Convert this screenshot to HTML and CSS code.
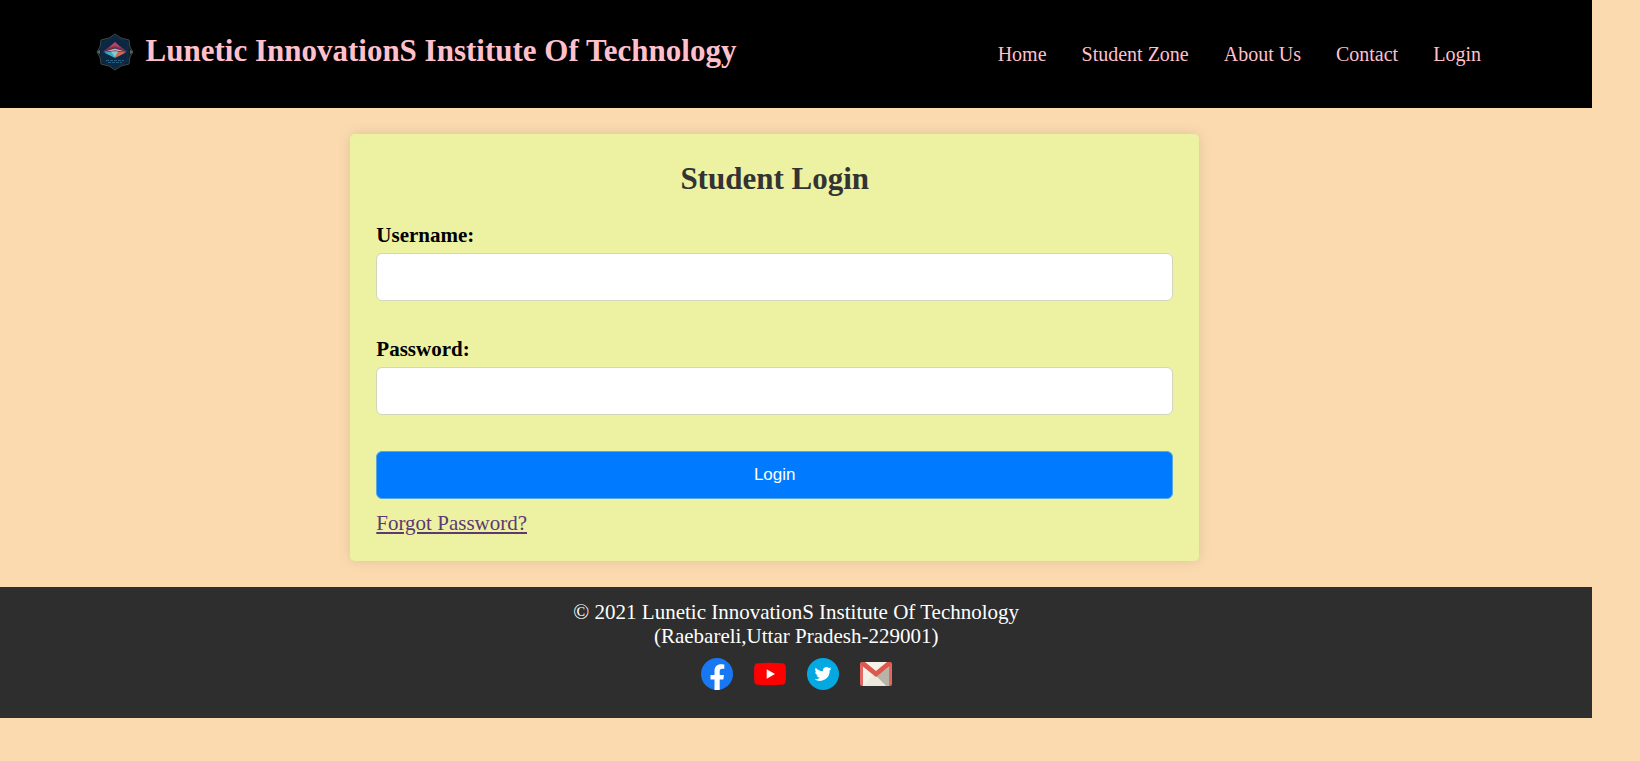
FILE: index.html
```html
<!DOCTYPE html>
<html lang="en">
<head>
<meta charset="utf-8">
<title>Student Login</title>
<link rel="stylesheet" href="styles.css">
</head>
<body>
<div class="page">
  <header class="header">
    <div class="brand">
      <svg class="logo" viewBox="0 0 38 38" aria-hidden="true">
        <path d="M19 1 25 5 33 7 34 14 37 19 34 24 33 31 25 33 19 37 13 33 5 31 4 24 1 19 4 14 5 7 13 5Z" fill="#0a2034" stroke="#3c4a45"/>
        <path d="M19 3 32 10V28L19 35 6 28V10Z" fill="#0b2743" stroke="#123049"/>
        <path d="M1 19 4 17V21ZM37 19 34 17V21Z" fill="#68664f"/>
        <path d="M19 9 31 18.500 19 15 7 18.500Z" fill="#7c2f55"/>
        <path d="M19 9 25 15 19 13 13 15Z" fill="#b8455f"/>
        <path d="M7 19 19 15.500 31 19 19 17.500Z" fill="#e7a4aa"/>
        <path d="M8 19.500 19 18V25Z" fill="#3fa9c0"/>
        <path d="M19 18 30 19.500 19 25Z" fill="#cf6a50"/>
        <path d="M15 18.500H22L19 24Z" fill="#7fcfd0"/>
        <path d="M10 27.500H28M12 29.500H26" stroke="#2b5f80" stroke-dasharray="3 1"/>
      </svg>
      <h1 class="title">Lunetic InnovationS Institute Of Technology</h1>
    </div>
    <nav class="nav">
      <a href="#">Home</a>
      <a href="#">Student Zone</a>
      <a href="#">About Us</a>
      <a href="#">Contact</a>
      <a href="#">Login</a>
    </nav>
  </header>
  <main class="main">
    <form class="card">
      <h2 class="card-title">Student Login</h2>
      <label class="label" for="username">Username:</label>
      <input class="input" id="username" type="text">
      <label class="label" for="password">Password:</label>
      <input class="input" id="password" type="password">
      <button class="submit" type="button">Login</button>
      <a class="forgot" href="#">Forgot Password?</a>
    </form>
  </main>
  <footer class="footer">
    <p class="copyright">© 2021 Lunetic InnovationS Institute Of Technology<br>(Raebareli,Uttar Pradesh-229001)</p>
    <div class="social">
      <a href="#" aria-label="Facebook"><svg viewBox="0 0 32 32"><circle cx="16" cy="16" r="16" fill="#1877f2"/><path d="M13.500 32V21.500H9.500V17h4v-3.500c0-4.800 2.600-7.200 6.600-7.200 1.600 0 3.200.3 3.200.3v4.200h-2c-2 0-2.600 1.200-2.600 2.500V17H23l-.7 4.500h-3.600V32Z" fill="#fff"/></svg></a>
      <a href="#" aria-label="YouTube"><svg viewBox="0 0 32 32"><path d="M4 5.300Q16 4.300 28 5.300 31.500 5.500 31.700 9q.5 7 0 14-.2 3.500-3.700 3.700-12 .8-24 0Q.5 26.500.3 23-.2 16 .3 9 .5 5.500 4 5.300Z" fill="#f00"/><path d="M12.700 11.300 21 16l-8.300 4.700Z" fill="#fff"/></svg></a>
      <a href="#" aria-label="Twitter"><svg viewBox="0 0 32 32"><circle cx="16" cy="16" r="16" fill="#03a9e0"/><path d="M24.500 10.600a7 7 0 0 1-2 .55 3.500 3.500 0 0 0 1.500-1.900 7 7 0 0 1-2.200.84 3.470 3.470 0 0 0-5.900 3.160 9.840 9.840 0 0 1-7.150-3.620 3.470 3.470 0 0 0 1.070 4.630 3.400 3.400 0 0 1-1.570-.43 3.480 3.480 0 0 0 2.780 3.440 3.500 3.500 0 0 1-1.560.06 3.470 3.470 0 0 0 3.240 2.400A7 7 0 0 1 7.500 21.200a9.840 9.840 0 0 0 15.180-8.750 7 7 0 0 0 1.820-1.850Z" fill="#fff"/></svg></a>
      <a href="#" aria-label="Gmail"><svg viewBox="0 0 32 32"><rect y="4" width="32" height="24" rx="2" fill="#e2675e"/><path d="M3 4H29V28H3Z" fill="#f4f1e9"/><path d="M16 18 29 9V28H26Z" fill="#b8b4a9"/><path d="M14 16 26 28H3Z" fill="#ece8dc"/><path d="M1.500 4H5L16 13 27 4h3.500L31 7 16 19 1 7Z" fill="#dc574d"/></svg></a>
    </div>
  </footer>
</div>
</body>
</html>
```

FILE: styles.css
```css
* {
  box-sizing: border-box;
}

body {
  margin: 0;
  background: #fadaae;
  font-family: "Liberation Serif", "Times New Roman", serif;
  font-size: 21px;
  line-height: 24px;
}

.page {
  width: 97.1%;
}

.header {
  display: flex;
  justify-content: space-between;
  align-items: flex-start;
  padding: 33px 7% 37px 6%;
  background: #000;
  color: #ffc0cb;
}

.brand {
  display: flex;
  align-items: flex-start;
  gap: 12px;
}

.logo {
  width: 38px;
  height: 38px;
}

.title {
  margin: 0;
  font-size: 31px;
  line-height: 36px;
}

.nav {
  display: flex;
  gap: 35px;
  padding-top: 9px;
  font-size: 20px;
}

.nav a {
  color: inherit;
  text-decoration: none;
}

.main {
  padding: 26px 0;
}

.card {
  display: flex;
  flex-direction: column;
  width: 53.3%;
  margin-left: 22%;
  padding: 27px 26px 26px;
  border-radius: 5px;
  background: #edf1a2;
  box-shadow: 0 0 14px rgba(0, 0, 0, 0.1);
}

.card-title {
  margin: 0 0 26px;
  color: #333;
  font-size: 31px;
  line-height: 36px;
  text-align: center;
}

.label {
  margin-bottom: 6px;
  font-weight: bold;
}

.input {
  width: 100%;
  height: 48px;
  margin-bottom: 36px;
  padding: 0 10px;
  border: 1px solid #d3d5bd;
  border-radius: 6px;
  background: #fff;
  font-size: 17px;
}

.submit {
  height: 48px;
  margin-bottom: 12px;
  border: 1px solid #5aa7dc;
  border-radius: 6px;
  background: #007bff;
  color: #fff;
  font-family: "Liberation Sans", Arial, sans-serif;
  font-size: 17px;
}

.forgot {
  align-self: flex-start;
  color: #5b3a72;
}

.footer {
  padding: 13px 0 28px;
  background: #2e2e2e;
  color: #fff;
  text-align: center;
}

.copyright {
  margin: 0 0 10px;
}

.social {
  display: flex;
  justify-content: center;
  gap: 21px;
}

.social svg {
  display: block;
  width: 32px;
  height: 32px;
}
```
